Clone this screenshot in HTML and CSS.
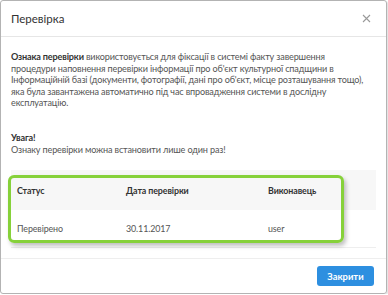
FILE: index.html
```html
<!DOCTYPE html>
<html lang="uk">
<head>
<meta charset="utf-8">
<link rel="stylesheet" href="styles.css">
</head>
<body>
<div class="modal">
  <div class="header">
    <span class="title">Перевірка</span>
    <svg class="close" width="9" height="9" viewBox="0 0 9 9"><path d="M1 1L8 8M8 1L1 8" stroke="#999" stroke-width="1.1" fill="none"/></svg>
  </div>
  <div class="body">
    <p class="desc"><b>Ознака перевірки</b> використовується для фіксації в системі факту завершення<br>процедури наповнення перевірки інформації про об'єкт культурної спадщини в<br>Інформаційній базі (документи, фотографії, дані про об'єкт, місце розташування тощо),<br>яка була завантажена автоматично під час впровадження системи в дослідну<br>експлуатацію.</p>
    <p class="warn"><b>Увага!</b><br>Ознаку перевірки можна встановити лише один раз!</p>
    <div class="table-wrap">
      <div class="table">
        <div class="row head">
          <span>Статус</span><span>Дата перевірки</span><span>Виконавець</span>
        </div>
        <div class="row">
          <span>Перевірено</span><span>30.11.2017</span><span>user</span>
        </div>
      </div>
      <div class="highlight"></div>
    </div>
  </div>
  <div class="footer">
    <button class="btn">Закрити</button>
  </div>
</div>
</body>
</html>
```
FILE: styles.css
```css
* { box-sizing: border-box; }
html, body { margin: 0; padding: 0; background: #fff; }
body { font-family: "Lato", "Noto Sans", sans-serif; }
.modal {
  width: 387px;
  height: 294px;
  border: 1px solid #b3b3b3;
  border-radius: 3px;
  display: flex;
  flex-direction: column;
  box-shadow: 1px 1px 1px rgba(0,0,0,0.12);
}
.header {
  height: 36px;
  flex: none;
  border-bottom: 1px solid #e6e6e6;
  display: flex;
  align-items: center;
  justify-content: space-between;
  padding: 0 15px 0 10px;
}
.title { font-size: 11.5px; color: #333; }
.close { display: block; }
.body {
  flex: 1;
  padding: 14px 12px 0 10px;
}
.desc, .warn {
  margin: 0;
  font-size: 9.1px;
  letter-spacing: -0.15px;
  line-height: 11.6px;
  color: #555;
  white-space: nowrap;
}
.desc b, .warn b { color: #333; font-weight: 700; }
.warn { margin-top: 23px; }
.table-wrap {
  position: relative;
  margin-top: 15px;
  margin-right: -2px;
}
.table {
  font-size: 8.9px;
  letter-spacing: -0.1px;
  color: #555;
  border-bottom: 1px solid #eee;
}
.row {
  display: grid;
  grid-template-columns: 109px 142px 1fr;
  padding: 0 6px;
  align-items: center;
  height: 37px;
}
.row.head {
  height: 40px;
  background: #f7f7f7;
  color: #333;
  font-weight: 700;
}
.highlight {
  position: absolute;
  left: -3px;
  top: 5px;
  width: 336px;
  height: 68px;
  border: 3px solid #86d13a;
  border-radius: 6px;
  box-shadow: 2px 3px 4px rgba(0,0,0,0.25);
}
.footer {
  height: 35px;
  flex: none;
  border-top: 1px solid #eee;
  display: flex;
  align-items: center;
  justify-content: flex-end;
  padding: 0 12px 0 0;
}
.btn {
  width: 57px;
  height: 20px;
  border: none;
  border-radius: 3px;
  background: #2d8fe0;
  color: #fff;
  font-family: "Lato", "Noto Sans", sans-serif;
  font-size: 9.4px;
  font-weight: 700;
  padding: 0;
}
```
